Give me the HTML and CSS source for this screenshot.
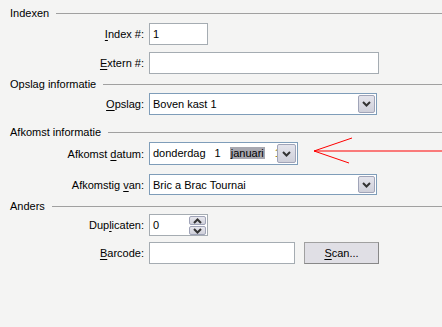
FILE: index.html
```html
<!DOCTYPE html>
<html lang="nl">
<head>
    <meta charset="UTF-8">
    <title>Exemplaar</title>
    <link rel="stylesheet" href="styles.css">
</head>
<body>

    <main class="form">

        <section class="group">
            <div class="group-title">Indexen</div>
            <div class="row row-first">
                <span class="label"><u>I</u>ndex #:</span>
                <div class="field field-short">1</div>
            </div>
            <div class="row">
                <span class="label"><u>E</u>xtern #:</span>
                <div class="field field-long"></div>
            </div>
        </section>

        <section class="group group-opslag">
            <div class="group-title">Opslag informatie</div>
            <div class="row row-tight">
                <span class="label"><u>O</u>pslag:</span>
                <div class="field select">Boven kast 1
                    <span class="drop-btn"><svg width="9" height="6" viewBox="0 0 9 6"><polyline points="1,1 4.5,4.5 8,1" fill="none" stroke="#333" stroke-width="2"/></svg></span>
                </div>
            </div>
        </section>

        <section class="group group-afkomst">
            <div class="group-title">Afkomst informatie</div>
            <div class="row row-first row-date">
                <span class="label">Afkomst <u>d</u>atum:</span>
                <div class="field select date">
                    <span>donderdag</span><span class="day">1</span><span class="month">januari</span><span class="cut">1</span>
                    <span class="drop-btn"><svg width="9" height="6" viewBox="0 0 9 6"><polyline points="1,1 4.5,4.5 8,1" fill="none" stroke="#333" stroke-width="2"/></svg></span>
                </div>
            </div>
            <div class="row row-afk">
                <span class="label">Afkomstig <u>v</u>an:</span>
                <div class="field select">Bric a Brac Tournai
                    <span class="drop-btn"><svg width="9" height="6" viewBox="0 0 9 6"><polyline points="1,1 4.5,4.5 8,1" fill="none" stroke="#333" stroke-width="2"/></svg></span>
                </div>
            </div>
        </section>

        <section class="group group-anders">
            <div class="group-title">Anders</div>
            <div class="row row-dup">
                <span class="label">Dup<u>l</u>icaten:</span>
                <div class="field field-short">0
                    <span class="spin">
                        <span class="spin-btn"><svg width="9" height="6" viewBox="0 0 9 6"><polyline points="1,5 4.5,1.5 8,5" fill="none" stroke="#333" stroke-width="2"/></svg></span>
                        <span class="spin-btn"><svg width="9" height="6" viewBox="0 0 9 6"><polyline points="1,1 4.5,4.5 8,1" fill="none" stroke="#333" stroke-width="2"/></svg></span>
                    </span>
                </div>
            </div>
            <div class="row row-barcode">
                <span class="label"><u>B</u>arcode:</span>
                <div class="barcode-line">
                    <div class="field field-barcode"></div>
                    <button class="btn"><u>S</u>can...</button>
                </div>
            </div>
        </section>

    </main>

    <!-- rode pijl naar het datumveld -->
    <svg class="arrow" width="130" height="30" viewBox="0 0 130 30">
        <line x1="2" y1="15" x2="130" y2="15" stroke="#ff0000" stroke-width="1"/>
        <line x1="2" y1="15" x2="40" y2="2" stroke="#ff0000" stroke-width="1"/>
        <line x1="2" y1="15" x2="37" y2="27" stroke="#ff0000" stroke-width="1"/>
    </svg>

</body>
</html>
```

FILE: styles.css
```css
/* Exemplaar formulier */
:root {
    --bg: #f4f4f3;
    --line: #a0a0a0;
    --field-border: #a5acb2;
    --select-border: #7f9db9;
    --text: #000;
    --ui-font: 'Liberation Sans', Arial, sans-serif;
}

* { margin: 0; padding: 0; box-sizing: border-box; }

body {
    background: var(--bg);
    font-family: var(--ui-font);
    font-size: 11px;
    color: var(--text);
    width: 442px;
    height: 327px;
    overflow: hidden;
    position: relative;
}

.form { padding-top: 6px; }

/* groepskop met lijn */
.group-title {
    display: flex;
    align-items: center;
    gap: 7px;
    height: 14px;
    padding-left: 10px;
    line-height: 14px;
}
.group-title::after {
    content: '';
    flex: 1;
    border-top: 1px solid var(--line);
}

.group-opslag { margin-top: 3px; }
.group-afkomst { margin-top: 10px; }
.group-anders { margin-top: 4px; }

/* rijen */
.row {
    display: grid;
    grid-template-columns: 144px auto;
    column-gap: 5px;
    align-items: center;
    margin-top: 7px;
}
.row-first { margin-top: 3px; }
.row-tight { margin-top: 2px; }
.row-afk { margin-top: 9px; }
.row-dup { margin-top: 1px; }
.row-barcode { margin-top: 6px; }

.label { text-align: right; white-space: nowrap; }
.label u { text-decoration-thickness: 1px; text-underline-offset: 2px; }

/* velden */
.field {
    position: relative;
    height: 22px;
    background: #fff;
    border: 1px solid var(--field-border);
    padding: 2px 3px;
    line-height: 16px;
    white-space: nowrap;
    overflow: hidden;
}
.field-short { width: 59px; }
.field-long { width: 230px; }
.field-barcode { width: 146px; }

.select {
    width: 228px;
    border-color: var(--select-border);
}
.date { width: 149px; height: 23px; }
.row-afk .select { height: 21px; }

.date .day { margin-left: 9px; }
.date .month {
    margin-left: 9px;
    background: #a8a8b0;
    padding: 0 1px;
}
.date .cut { margin-left: 10px; color: #8a7a00; }

.drop-btn {
    position: absolute;
    top: 1px;
    right: 1px;
    bottom: 1px;
    width: 17px;
    display: flex;
    align-items: center;
    justify-content: center;
    background: linear-gradient(#e4e4ec, #cfd0da);
    border: 1px solid #a0a4b8;
    border-radius: 2px;
}
.date .drop-btn { right: 1px; width: 19px; }

/* draaiknoppen */
.spin {
    position: absolute;
    top: 1px;
    right: 1px;
    display: flex;
    flex-direction: column;
    gap: 1px;
}
.spin-btn {
    width: 17px;
    height: 9px;
    display: flex;
    align-items: center;
    justify-content: center;
    background: linear-gradient(#e8e8ee, #cfd0da);
    border: 1px solid #a0a4b8;
    border-radius: 2px;
}

.barcode-line {
    display: flex;
    align-items: center;
    gap: 9px;
}
.btn {
    width: 75px;
    height: 22px;
    font-family: var(--ui-font);
    font-size: 11px;
    color: var(--text);
    background: #e0dfe5;
    border: 1px solid #a0a0a0;
    border-right-color: #888;
    border-bottom-color: #888;
}
.btn u { text-underline-offset: 2px; }

/* pijl over het formulier */
.arrow {
    position: absolute;
    left: 312px;
    top: 136px;
    pointer-events: none;
}
```
